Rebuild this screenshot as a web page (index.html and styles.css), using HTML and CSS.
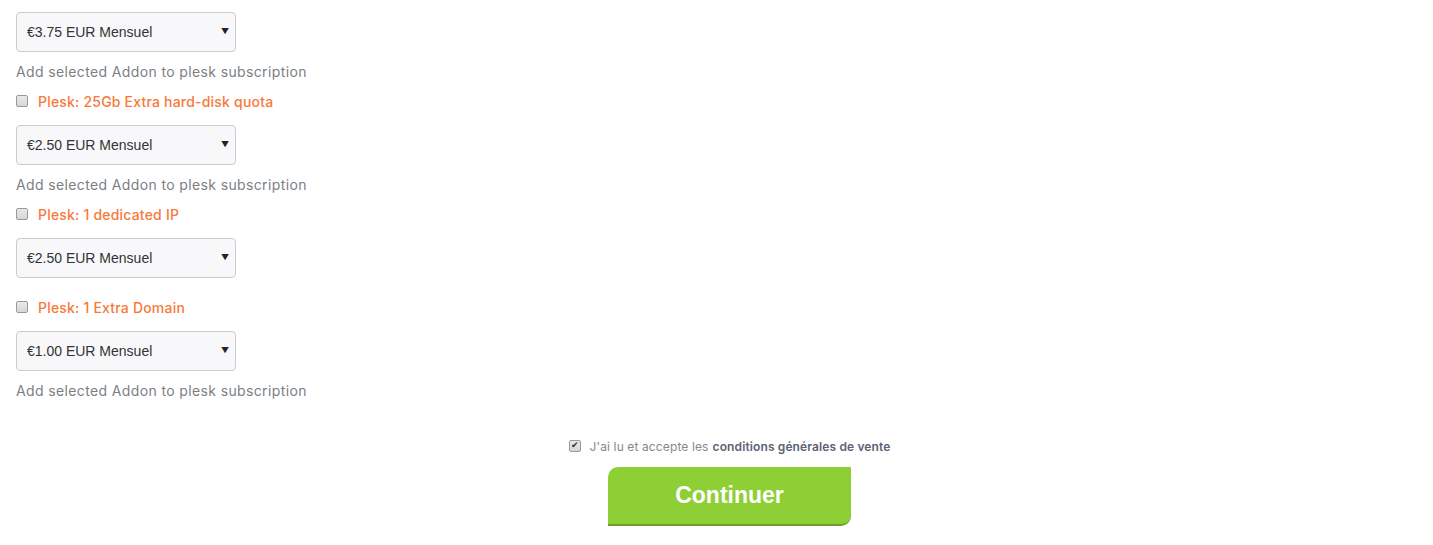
FILE: index.html
```html
<!DOCTYPE html>
<html lang="fr">
<head>
  <meta charset="UTF-8">
  <title>Addons</title>
  <link rel="stylesheet" href="styles.css">
</head>
<body>
  <div class="container">
    <div class="select-wrap first">
      <select class="cycle"><option>€3.75 EUR Mensuel</option></select>
    </div>
    <div class="helper">Add selected Addon to plesk subscription</div>

    <!-- Addon: disk quota -->
    <label class="addon-name"><input type="checkbox"> Plesk: 25Gb Extra hard-disk quota</label>
    <div class="select-wrap">
      <select class="cycle"><option>€2.50 EUR Mensuel</option></select>
    </div>
    <div class="helper">Add selected Addon to plesk subscription</div>

    <!-- Addon: dedicated IP -->
    <label class="addon-name"><input type="checkbox"> Plesk: 1 dedicated IP</label>
    <div class="select-wrap">
      <select class="cycle"><option>€2.50 EUR Mensuel</option></select>
    </div>

    <!-- Addon: extra domain -->
    <label class="addon-name spaced"><input type="checkbox"> Plesk: 1 Extra Domain</label>
    <div class="select-wrap">
      <select class="cycle"><option>€1.00 EUR Mensuel</option></select>
    </div>
    <div class="helper">Add selected Addon to plesk subscription</div>

    <div class="checkout">
      <label class="terms"><input type="checkbox" checked> J'ai lu et accepte les <a href="#">conditions générales de vente</a></label>
      <button class="btn-continue">Continuer</button>
    </div>
  </div>
</body>
</html>
```

FILE: styles.css
```css
* {
  margin: 0;
  padding: 0;
  box-sizing: border-box;
}

body {
  font-family: 'Inter', 'Open Sans', sans-serif;
  background: #fff;
  color: #777;
}

.container {
  padding: 12px 16px 0;
  display: flex;
  flex-direction: column;
  align-items: flex-start;
}

/* Billing cycle select */
.select-wrap {
  position: relative;
  width: 220px;
  height: 40px;
  margin-top: 14px;
}

.select-wrap.first {
  margin-top: 0;
}

.select-wrap::after {
  content: "\25BC";
  position: absolute;
  right: 7px;
  top: 14px;
  font-size: 8px;
  color: #222;
  pointer-events: none;
}

.cycle {
  -webkit-appearance: none;
  appearance: none;
  width: 100%;
  height: 100%;
  padding: 0 10px;
  border: 1px solid #ccc;
  border-radius: 4px;
  background: #f8f8fa;
  font-family: 'Liberation Sans', Arial, sans-serif;
  font-size: 14px;
  color: #333;
  outline: none;
}

.helper {
  margin-top: 10px;
  line-height: 20px;
  font-size: 14px;
  color: #7a7f86;
  letter-spacing: 0.37px;
}

/* Checkboxes, greyed like the native ones */
input[type="checkbox"] {
  -webkit-appearance: none;
  appearance: none;
  position: relative;
  width: 12px;
  height: 12px;
  margin: 0;
  flex-shrink: 0;
  border: 1px solid #9a9a9a;
  border-radius: 2px;
  background: linear-gradient(#e9e9e9, #d6d6d6);
}

input[type="checkbox"]:checked::after {
  content: "\2714";
  position: absolute;
  left: 1px;
  top: -1px;
  font-size: 9px;
  color: #333;
}

/* Addon title with checkbox */
.addon-name {
  display: flex;
  align-items: center;
  gap: 10px;
  height: 20px;
  margin-top: 9px;
  font-size: 14px;
  font-weight: 500;
  color: #f7793a;
  letter-spacing: 0.2px;
}

.addon-name.spaced {
  margin-top: 19px;
}

/* Terms + submit */
.checkout {
  align-self: stretch;
  margin-top: 35px;
  display: flex;
  flex-direction: column;
  align-items: center;
  padding-left: 26px;
}

.terms {
  display: flex;
  align-items: center;
  gap: 9px;
  height: 20px;
  font-size: 12px;
  color: #888;
  letter-spacing: 0.12px;
}

.terms a {
  color: #5d6274;
  font-weight: 600;
  text-decoration: none;
  margin-left: -5px;
}

.btn-continue {
  margin-top: 11px;
  width: 243px;
  height: 59px;
  background: #8ecf35;
  border: none;
  border-bottom: 2px solid #6c9e2a;
  border-radius: 10px 0 10px 0;
  color: #fff;
  font-family: 'Liberation Sans', Arial, sans-serif;
  font-size: 23px;
  font-weight: bold;
  cursor: pointer;
}
```
